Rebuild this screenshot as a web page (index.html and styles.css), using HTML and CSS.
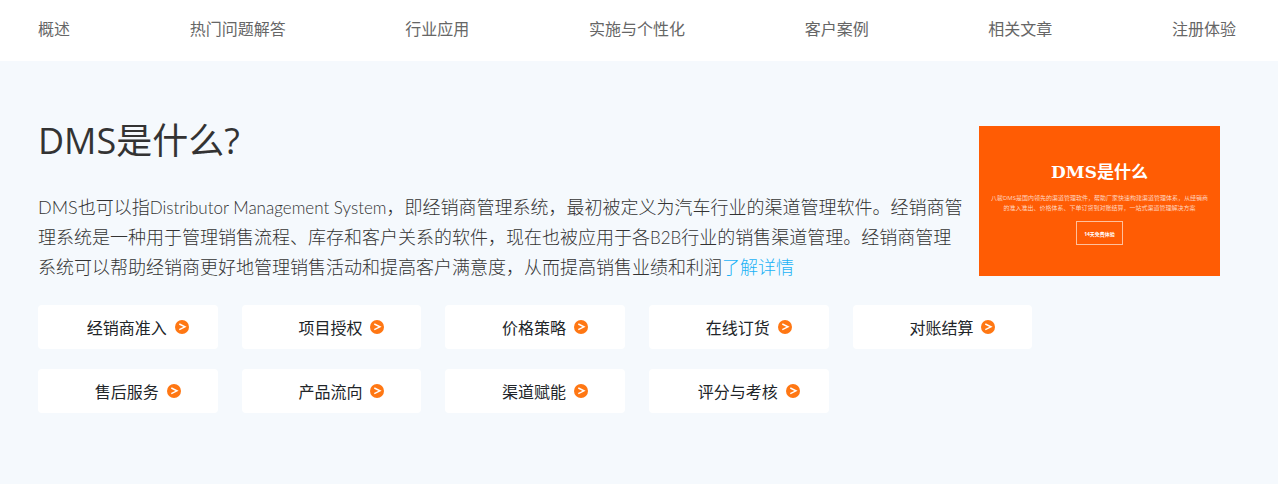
FILE: index.html
```html
<!DOCTYPE html>
<html lang="zh-CN">
<head>
    <meta charset="UTF-8">
    <meta name="viewport" content="width=device-width, initial-scale=1.0">
    <title>DMS是什么</title>
    <link rel="stylesheet" href="styles.css">
</head>
<body>
    <nav class="sub-nav">
        <a href="#overview">概述</a>
        <a href="#faq">热门问题解答</a>
        <a href="#industry">行业应用</a>
        <a href="#service">实施与个性化</a>
        <a href="#cases">客户案例</a>
        <a href="#articles">相关文章</a>
        <a href="#register">注册体验</a>
    </nav>

    <section id="overview" class="overview">
        <div class="intro">
            <div class="intro-text">
                <h1>DMS是什么?</h1>
                <p>DMS也可以指<span lang="en">Distributor Management System</span>，即经销商管理系统，最初被定义为汽车行业的渠道管理软件。经销商管理系统是一种用于管理销售流程、库存和客户关系的软件，现在也被应用于各<span lang="en">B2B</span>行业的销售渠道管理。经销商管理系统可以帮助经销商更好地管理销售活动和提高客户满意度，从而提高销售业绩和利润<a href="#more">了解详情</a></p>
            </div>
            <aside class="banner">
                <h2>DMS是什么</h2>
                <p>八骏DMS是国内领先的渠道管理软件，帮助厂家快速构建渠道管理体系，从经销商的准入准出、价格体系、下单订货到对账结算，一站式渠道管理解决方案</p>
                <button type="button">14天免费体验</button>
            </aside>
        </div>

        <svg class="symbols" width="0" height="0">
            <symbol id="arrow" viewBox="0 0 14 14">
                <circle cx="7" cy="7" r="7" fill="#ff7713"/>
                <path d="M4.3 4 10 6.8 4.3 9.6" fill="none" stroke="#fff" stroke-width="1.4"/>
            </symbol>
        </svg>

        <div class="features">
            <a href="#access">经销商准入<svg><use href="#arrow"/></svg></a>
            <a href="#project">项目授权<svg><use href="#arrow"/></svg></a>
            <a href="#price">价格策略<svg><use href="#arrow"/></svg></a>
            <a href="#order">在线订货<svg><use href="#arrow"/></svg></a>
            <a href="#settlement">对账结算<svg><use href="#arrow"/></svg></a>
            <a href="#aftersales">售后服务<svg><use href="#arrow"/></svg></a>
            <a href="#flow">产品流向<svg><use href="#arrow"/></svg></a>
            <a href="#channel">渠道赋能<svg><use href="#arrow"/></svg></a>
            <a href="#assessment">评分与考核<svg><use href="#arrow"/></svg></a>
        </div>
    </section>
</body>
</html>
```
FILE: styles.css
```css
/* Global Styles */
* {
    box-sizing: border-box;
}

body {
    font-family: "Open Sans", "Noto Sans CJK SC", sans-serif;
    margin: 0;
    background: #f5f9fd;
    color: #333;
}

a {
    text-decoration: none;
}

h1, h2, p {
    margin: 0;
}

/* Navigation */
.sub-nav {
    display: flex;
    justify-content: space-between;
    padding: 17px 42px 20px 38px;
    background: #fff;
}

.sub-nav a {
    color: #666;
    font-size: 16px;
    line-height: 24px;
}

/* Overview */
.overview {
    padding: 53px 42px 70px 38px;
}

.intro {
    display: flex;
    align-items: flex-start;
    gap: 16px;
    margin-bottom: 23px;
}

.intro-text {
    flex: 1;
}

.intro-text h1 {
    font-size: 36px;
    font-weight: 400;
    line-height: 54px;
    margin-bottom: 24px;
}

.intro-text p {
    font-family: Lato, "Noto Sans CJK SC", sans-serif;
    font-size: 18px;
    font-weight: 300;
    line-height: 30px;
}

.intro-text p span {
    font-size: 17px;
    line-height: 1;
}

.intro-text p a {
    color: #1cb2f5;
}

.banner {
    flex: none;
    width: 241px;
    height: 150px;
    margin: 12px 16px 0 0;
    padding: 32px 10px 0;
    background: #ff5c04;
    color: #fff;
    text-align: center;
}

.banner h2 {
    font-family: "DejaVu Serif", "Noto Sans CJK SC", serif;
    font-size: 17px;
    font-weight: 700;
    line-height: 28px;
    margin-bottom: 7px;
}

.banner p {
    font-size: 6px;
    line-height: 10px;
    margin-bottom: 8px;
    color: #ffd6c0;
}

.banner button {
    display: block;
    width: 47px;
    height: 24px;
    margin: 0 auto;
    padding: 0;
    background: none;
    border: 1px solid #ffc09c;
    color: #fff;
    font-family: inherit;
    font-size: 5px;
    font-weight: 700;
}

/* Feature links */
.symbols {
    position: absolute;
}

.features {
    display: grid;
    grid-template-columns: repeat(5, 15%);
    gap: 20px 2%;
}

.features a {
    display: flex;
    align-items: center;
    justify-content: center;
    height: 44px;
    padding-left: 20px;
    background: #fff;
    border-radius: 4px;
    color: #212529;
    font-size: 16px;
}

.features svg {
    width: 14px;
    height: 14px;
    margin-left: 8px;
}
```
